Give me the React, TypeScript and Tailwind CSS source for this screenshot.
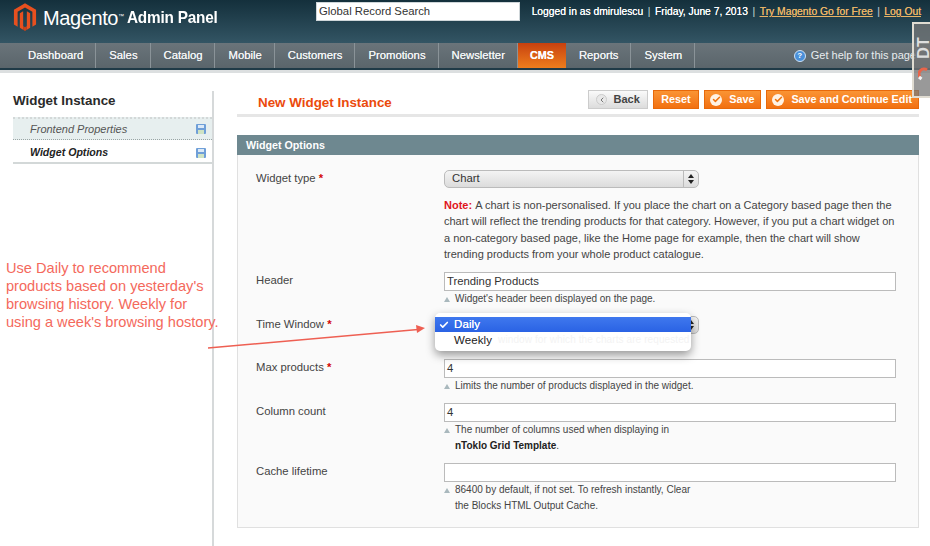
import { Check, ChevronLeft } from "lucide-react";

const navItems = ["Dashboard", "Sales", "Catalog", "Mobile", "Customers", "Promotions", "Newsletter", "CMS", "Reports", "System"];

function Logo() {
  return (
    <svg width="24" height="30" viewBox="0 0 26 32" className="shrink-0">
      <path d="M13 0 25 7v16l-4 2.4V9.2L13 4.6 5 9.2v16.2L1 23V7z" fill="#e8501f" />
      <path d="M11 8.6v20.2L7.4 26.6V10.8zM15 8.6v20.2l3.6-2.2V10.8z" fill="#e8501f" />
      <path d="M11 28.8 13 30l2-1.2v-4l-2 1.2-2-1.2z" fill="#c9431a" />
    </svg>
  );
}

function SaveIcon() {
  return (
    <svg width="10" height="10" viewBox="0 0 10 10" className="shrink-0">
      <rect width="10" height="10" rx="1" fill="#6f9fd8" />
      <rect x="2" y="1" width="6" height="3" fill="#dbe9f7" />
      <rect x="2" y="6" width="6" height="4" fill="#cfe3c4" />
    </svg>
  );
}

function OrangeButton({ label, icon }: { label: string; icon?: boolean }) {
  return (
    <button className={`h-[19px] flex items-center gap-[7px] ${icon ? "pl-[5px] pr-[6px]" : "px-[7.5px]"} border border-[#e8690a] bg-gradient-to-b from-[#fa9433] to-[#f2700f] text-white text-[10.8px] font-bold whitespace-nowrap`}>
      {icon && (
        <span className="w-[12px] h-[12px] rounded-full bg-[#fff3e5] flex items-center justify-center">
          <Check className="w-[9px] h-[9px] text-[#ed7410]" strokeWidth={4} />
        </span>
      )}
      {label}
    </button>
  );
}

function Hint({ children }: { children: React.ReactNode }) {
  return (
    <div className="flex gap-[5px] text-[10px] leading-[16px] text-[#444]">
      <span className="mt-[6px] w-0 h-0 shrink-0 border-x-[3px] border-x-transparent border-b-[5px] border-b-[#a9b8bd]" />
      <div>{children}</div>
    </div>
  );
}

function Row({ label, required, className, children }: { label: string; required?: boolean; className: string; children: React.ReactNode }) {
  return (
    <div className={`flex ${className}`}>
      <div className="w-[188px] shrink-0 text-[11.3px] leading-[16px] text-[#444]">
        {label}
        {required && <span className="text-[#d40707] font-bold"> *</span>}
      </div>
      <div className="w-[452px]">{children}</div>
    </div>
  );
}

function TextInput({ value }: { value: string }) {
  return (
    <div className="h-[19px] border border-[#bbb] bg-white px-[2px] text-[11.3px] leading-[17px] text-[#333]">
      {value}
    </div>
  );
}

function Stepper() {
  return (
    <span className="w-[15px] h-full border-l border-[#bbb] flex flex-col items-center justify-center gap-[2px]">
      <span className="w-0 h-0 border-x-[3px] border-x-transparent border-b-[4px] border-b-[#222]" />
      <span className="w-0 h-0 border-x-[3px] border-x-transparent border-t-[4px] border-t-[#222]" />
    </span>
  );
}

export default function App() {
  return (
    <div className="relative w-[930px] h-[546px] overflow-hidden bg-white font-['Liberation_Sans',Arial,sans-serif]">
      {/* header */}
      <header className="h-[43px] bg-gradient-to-b from-[#14303c] to-[#335564] flex items-start pl-[13px] pr-[9px]">
        <div className="mt-[3px] flex items-center">
          <Logo />
          <span className="ml-[6px] text-white text-[20px] leading-[26px] tracking-[-0.4px]">Magento</span>
          <span className="text-white text-[6px] self-start mt-[9px] mr-[3px]">™</span>
          <span className="text-white text-[17px] font-bold leading-[26px] tracking-[-0.2px] scale-x-[0.9] origin-left whitespace-nowrap">Admin Panel</span>
        </div>
        <div className="absolute left-[316px] top-[2px] w-[204px] h-[19px] bg-white border border-[#cfd6d9] pl-[2px] text-[11.3px] leading-[17px] text-[#333]">
          Global Record Search
        </div>
        <div className="ml-auto mt-[5px] flex items-center text-[10.3px] leading-[14px] text-white whitespace-nowrap [text-shadow:0_0_0.6px_currentColor]">
          <span>Logged in as dmirulescu</span>
          <span className="mx-[4.5px] text-[#9bb0b8]">|</span>
          <span>Friday, June 7, 2013</span>
          <span className="mx-[4.5px] text-[#9bb0b8]">|</span>
          <span className="text-[#eab466] underline">Try Magento Go for Free</span>
          <span className="mx-[4.5px] text-[#9bb0b8]">|</span>
          <span className="text-[#eab466] underline">Log Out</span>
        </div>
      </header>

      {/* nav */}
      <nav className="h-[27px] bg-gradient-to-b from-[#6a747a] to-[#5a656b] border-b-[2px] border-b-[#1f3a47] flex pl-[15px] text-[11.3px] text-[#f2f4f5] [text-shadow:0_0_0.6px_#f2f4f5]">
        {navItems.map((item) => (
          <span
            key={item}
            className={
              item === "CMS"
                ? "flex items-center px-[12px] font-bold text-[10.8px] bg-gradient-to-b from-[#c7400f] to-[#ee7d1d] text-white"
                : "flex items-center pl-[13px] pr-[12px] border-r border-[#8a9398]"
            }
          >
            {item}
          </span>
        ))}
        <div className="ml-auto mr-[14px] flex items-center gap-[5px] text-[11px] text-[#e8ecee] whitespace-nowrap [text-shadow:none]">
          <span className="w-[12px] h-[12px] rounded-full bg-[#4a90d9] border border-[#cfe2f5] text-white text-[8px] font-bold flex items-center justify-center">?</span>
          <span>Get help for this page</span>
        </div>
      </nav>
      <div className="h-[3px] bg-[#dcdfe0]" />

      {/* body */}
      <div className="flex">
        <aside className="ml-[13px] mt-[18px] w-[201px] h-[455px] border-r-[2px] border-r-[#d6d9da] shrink-0">
          <h3 className="h-[26px] text-[13.4px] font-bold leading-[20px] text-[#2a2a2a]">Widget Instance</h3>
          <div className="h-[23px] bg-[#e7efef] border-t-[2px] border-t-[#d3d8d8] border-b border-dotted border-b-[#9aa5a5] flex items-center justify-between pl-[17px] pr-[6px] text-[11px] italic text-[#555]">
            Frontend Properties
            <SaveIcon />
          </div>
          <div className="h-[24px] pt-[3px] border-b-[2px] border-b-[#d3d8d8] flex items-center justify-between pl-[17px] pr-[6px] text-[10.6px] font-bold italic text-[#222]">
            Widget Options
            <SaveIcon />
          </div>
        </aside>

        <main className="ml-[23px] mt-[17px] w-[682px]">
          <div className="h-[27px] border-b-[3px] border-b-[#e6e6e6] flex justify-between items-start">
            <h3 className="ml-[21px] mt-[3px] text-[13.4px] font-bold leading-[20px] text-[#eb4a0c]">New Widget Instance</h3>
            <div className="flex gap-[5px]">
              <button className="h-[19px] flex items-center gap-[6px] pl-[7px] pr-[7px] border border-[#ccc] bg-gradient-to-b from-[#fafafa] to-[#dcdcdc] text-[#444] text-[11px] font-bold">
                <span className="w-[11px] h-[11px] rounded-full bg-[#e8e8e8] border border-[#ccc] flex items-center justify-center">
                  <ChevronLeft className="w-[8px] h-[8px] text-[#777]" strokeWidth={3} />
                </span>
                Back
              </button>
              <OrangeButton label="Reset" />
              <OrangeButton label="Save" icon />
              <OrangeButton label="Save and Continue Edit" icon />
            </div>
          </div>

          <section className="mt-[18px]">
            <h4 className="h-[20px] bg-[#6e8890] pl-[9px] text-[10.7px] font-bold leading-[20px] text-white">Widget Options</h4>
            <div className="h-[373px] border border-t-0 border-[#e0e0e0] bg-[#fafafa] pl-[18px] pt-[15px]">
              <Row label="Widget type" required className="">
                <div className="h-[18px] w-[255px] rounded-[5px] border border-[#bbb] bg-gradient-to-b from-[#f4f4f4] to-[#dcdcdc] flex items-center justify-between pl-[7px] text-[11.3px] leading-[14px] text-[#333]">
                  <span className="-mt-[2px]">Chart</span>
                  <Stepper />
                </div>
                <p className="mt-[9px] w-[456px] text-[11px] leading-[16.25px] text-[#444]">
                  <span className="font-bold text-[#e0141c]">Note: </span>
                  A chart is non-personalised. If you place the chart on a Category based page then the chart will reflect the trending products for that category. However, if you put a chart widget on a non-category based page, like the Home page for example, then the chart will show trending products from your whole product catalogue.
                </p>
              </Row>
              <Row label="Header" className="mt-[10px]">
                <TextInput value="Trending Products" />
                <Hint>Widget's header been displayed on the page.</Hint>
              </Row>
              <Row label="Time Window" required className="mt-[9px]">
                <div className="h-[18px] w-[255px] rounded-[5px] border border-[#bbb] bg-gradient-to-b from-[#f4f4f4] to-[#dcdcdc] flex items-center justify-end">
                  <Stepper />
                </div>
                <div className="h-[25px]" />
              </Row>
              <Row label="Max products" required className="">
                <TextInput value="4" />
                <Hint>Limits the number of products displayed in the widget.</Hint>
              </Row>
              <Row label="Column count" className="mt-[9px]">
                <TextInput value="4" />
                <Hint>
                  The number of columns used when displaying in
                  <br />
                  <b className="text-[#222]">nToklo Grid Template</b>.
                </Hint>
              </Row>
              <Row label="Cache lifetime" className="mt-[9px]">
                <TextInput value="" />
                <Hint>
                  86400 by default, if not set. To refresh instantly, Clear
                  <br />
                  the Blocks HTML Output Cache.
                </Hint>
              </Row>
            </div>
          </section>
        </main>
      </div>

      {/* open select menu */}
      <div className="absolute left-[435px] top-[313px] w-[256px] h-[38px] rounded-[5px] bg-white shadow-[0_4px_10px_rgba(0,0,0,0.4)] pt-[4px] text-[11.5px] tracking-[0.1px]">
        <div className="h-[15px] bg-gradient-to-b from-[#3f78ee] to-[#2a62e4] text-white flex items-center pl-[4px] gap-[5px] [text-shadow:0_0_0.6px_white]">
          <Check className="w-[10px] h-[10px]" strokeWidth={4} />
          {"Daily"}
        </div>
        <div className="h-[16px] pl-[19px] text-[#222] leading-[16px] flex">
          Weekly
          <span className="ml-[6px] text-[10px] text-[#f3f3f3]">window for which the charts are requested</span>
        </div>
      </div>

      {/* annotation */}
      <p className="absolute left-[6px] top-[259px] text-[14.6px] leading-[18px] text-[#f4695c] whitespace-nowrap">
        Use Daily to recommend
        <br />
        products based on yesterday's
        <br />
        browsing history. Weekly for
        <br />
        using a week's browsing hostory.
      </p>
      <svg className="absolute left-[205px] top-[320px]" width="230" height="32" viewBox="0 0 230 32">
        <path d="M3 28 L213 9.4" stroke="#ee5f52" strokeWidth="1.5" />
        <path d="M220 8 L211 5 L212 13z" fill="#ee5f52" />
      </svg>

      {/* floating widget at the right edge */}
      <div className="absolute left-[912px] top-[22px] w-[18px] h-[76px] bg-[#777]/75 border-l-2 border-t-2 border-b-2 border-[#e0dcd2] overflow-hidden flex flex-col items-center">
        <span className="mt-[14px] h-[20px] ml-[4px] shrink-0 -rotate-90 text-[#dedede] text-[16px] font-bold leading-[20px] whitespace-nowrap">DT</span>
        <svg className="mt-[9px] ml-[4px] shrink-0" width="12" height="14" viewBox="0 0 12 14">
          <path d="M2 10 A5 5 0 0 1 9 3" fill="none" stroke="#e8654a" strokeWidth="3" />
          <path d="M1 10 L3.5 12" stroke="#f2f2f2" strokeWidth="3" />
        </svg>
      </div>
    </div>
  );
}
